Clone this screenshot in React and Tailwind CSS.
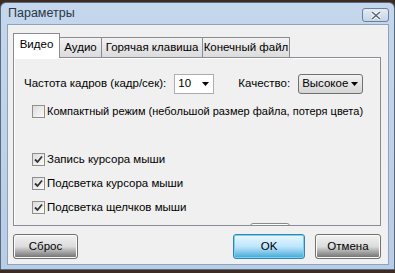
import { useState } from "react";

const font = { fontFamily: '"Liberation Sans", Arial, sans-serif' };

function Check({ checked, label, size = "text-[11.5px]" }) {
  return (
    <label className={"flex items-center gap-[2px] leading-[13px] text-black " + size}>
      <span className="grid h-[13px] w-[13px] place-items-center border border-[#8f8f8f] bg-gradient-to-br from-[#dcdcdc] to-[#fbfbfb]">
        {checked ? (
          <svg width="9" height="9" viewBox="0 0 9 9">
            <path d="M1 4.5 L3.5 7 L8 1.5" fill="none" stroke="#333" strokeWidth="1.8" />
          </svg>
        ) : null}
      </span>
      {label}
    </label>
  );
}

function WinButton({ children, primary, className = "" }) {
  return (
    <button
      type="button"
      className={
        "flex h-[25px] items-center justify-center rounded-[3px] border text-[11.5px] text-black " +
        (primary
          ? "border-[#3c7fb1] bg-gradient-to-b from-[#eaf6fd] via-[#bee6fd] to-[#37a7d7] shadow-[inset_0_0_0_1px_#6fd7f5]"
          : "border-[#707070] bg-gradient-to-b from-[#f2f2f2] via-[#dcdcdc] to-[#6d6d6d] shadow-[inset_0_0_0_1px_#fcfcfc]") +
        " " +
        className
      }
    >
      {children}
    </button>
  );
}

const tabs = [
  ["Видео", "w-[47px]"],
  ["Аудио", "w-[43px]"],
  ["Горячая клавиша", "w-[102px]"],
  ["Конечный файл", "w-[88px]"],
];

export default function App() {
  const [tab, setTab] = useState("Видео");

  return (
    <div className="h-[273px] w-[395px] overflow-hidden bg-[#3b2b22] pt-[2px]" style={font}>
      <div className="flex h-[268px] flex-col rounded-t-[6px] border border-[#5a6b80] bg-gradient-to-b from-[#c4d7ec] to-[#b8cde6] pb-[4px] pl-[6px] pr-[5px]">
        <div className="flex h-[21px] items-center justify-between">
          <span className="pl-[1px] text-[12.5px] text-[#2a3646]">Параметры</span>
          <span className="mt-[3px] grid h-[14px] w-[27px] place-items-center rounded-[3px] border border-[#6c7f9c] bg-gradient-to-b from-[#e3ecf6] to-[#c5d4e7]">
            <svg width="12" height="9" viewBox="0 0 12 9">
              <path d="M2 1 L10 8 M10 1 L2 8" stroke="#fff" strokeWidth="3.2" />
              <path d="M2 1 L10 8 M10 1 L2 8" stroke="#5a6478" strokeWidth="1.6" />
            </svg>
          </span>
        </div>
        <div className="flex flex-1 flex-col border border-[#8ea2ba] bg-[#f0f0f0] pl-[5px] pr-[7px] pt-[8px]">
          <div className="flex h-[24px] items-end">
            {tabs.map(([t, w]) => (
              <button
                key={t}
                type="button"
                onClick={() => setTab(t)}
                className={
                  w +
                  " border border-b-0 border-[#898c95] text-[11.5px] text-black " +
                  (tab === t
                    ? "relative z-10 -mb-px h-[25px] bg-white pb-[2px]"
                    : "-ml-px h-[20px] bg-gradient-to-b from-[#f2f2f2] to-[#dcdcdc]")
                }
              >
                {t}
              </button>
            ))}
          </div>
          <div className="flex h-[169px] flex-col overflow-hidden border border-[#898c95] bg-[#f0f0f0] pl-[10px] pt-[16px] shadow-[inset_1px_1px_0_#fff]">
            <div className="flex h-[20px] items-center text-[11.5px] text-black">
              <span>Частота кадров (кадр/сек):</span>
              <div className="ml-[8px] flex h-[20px] w-[40px] items-center justify-between border border-[#abadb3] bg-white pl-[3px] pr-[4px]">
                <span>10</span>
                <svg width="7" height="4" viewBox="0 0 7 4"><path d="M0 0 H7 L3.5 4 Z" fill="#000" /></svg>
              </div>
              <span className="ml-[24px]">Качество:</span>
              <div className="ml-[8px] flex h-[20px] w-[65px] items-center justify-between rounded-[3px] border border-[#707070] bg-gradient-to-b from-[#f2f2f2] to-[#d5d5d5] pl-[3px] pr-[4px]">
                <span>Высокое</span>
                <svg width="7" height="4" viewBox="0 0 7 4"><path d="M0 0 H7 L3.5 4 Z" fill="#000" /></svg>
              </div>
            </div>
            <div className="mt-[11px] pl-[8px]">
              <Check size="text-[11px]" label="Компактный режим (небольшой размер файла, потеря цвета)" />
            </div>
            <div className="mt-[35px] flex flex-col gap-[11px] pl-[8px]">
              <Check checked label="Запись курсора мыши" />
              <Check checked label="Подсветка курсора мыши" />
              <Check checked label="Подсветка щелчков мыши" />
            </div>
            <div className="ml-[226px] mt-[9px] h-[8px] w-[40px] shrink-0 rounded-t-[3px] border border-[#8a8a8a] bg-white" />
          </div>
          <div className="mt-[8px] flex items-center">
            <WinButton className="w-[65px]">Сброс</WinButton>
            <WinButton primary className="ml-auto w-[72px]">OK</WinButton>
            <WinButton className="ml-[10px] w-[66px]">Отмена</WinButton>
          </div>
        </div>
      </div>
    </div>
  );
}
